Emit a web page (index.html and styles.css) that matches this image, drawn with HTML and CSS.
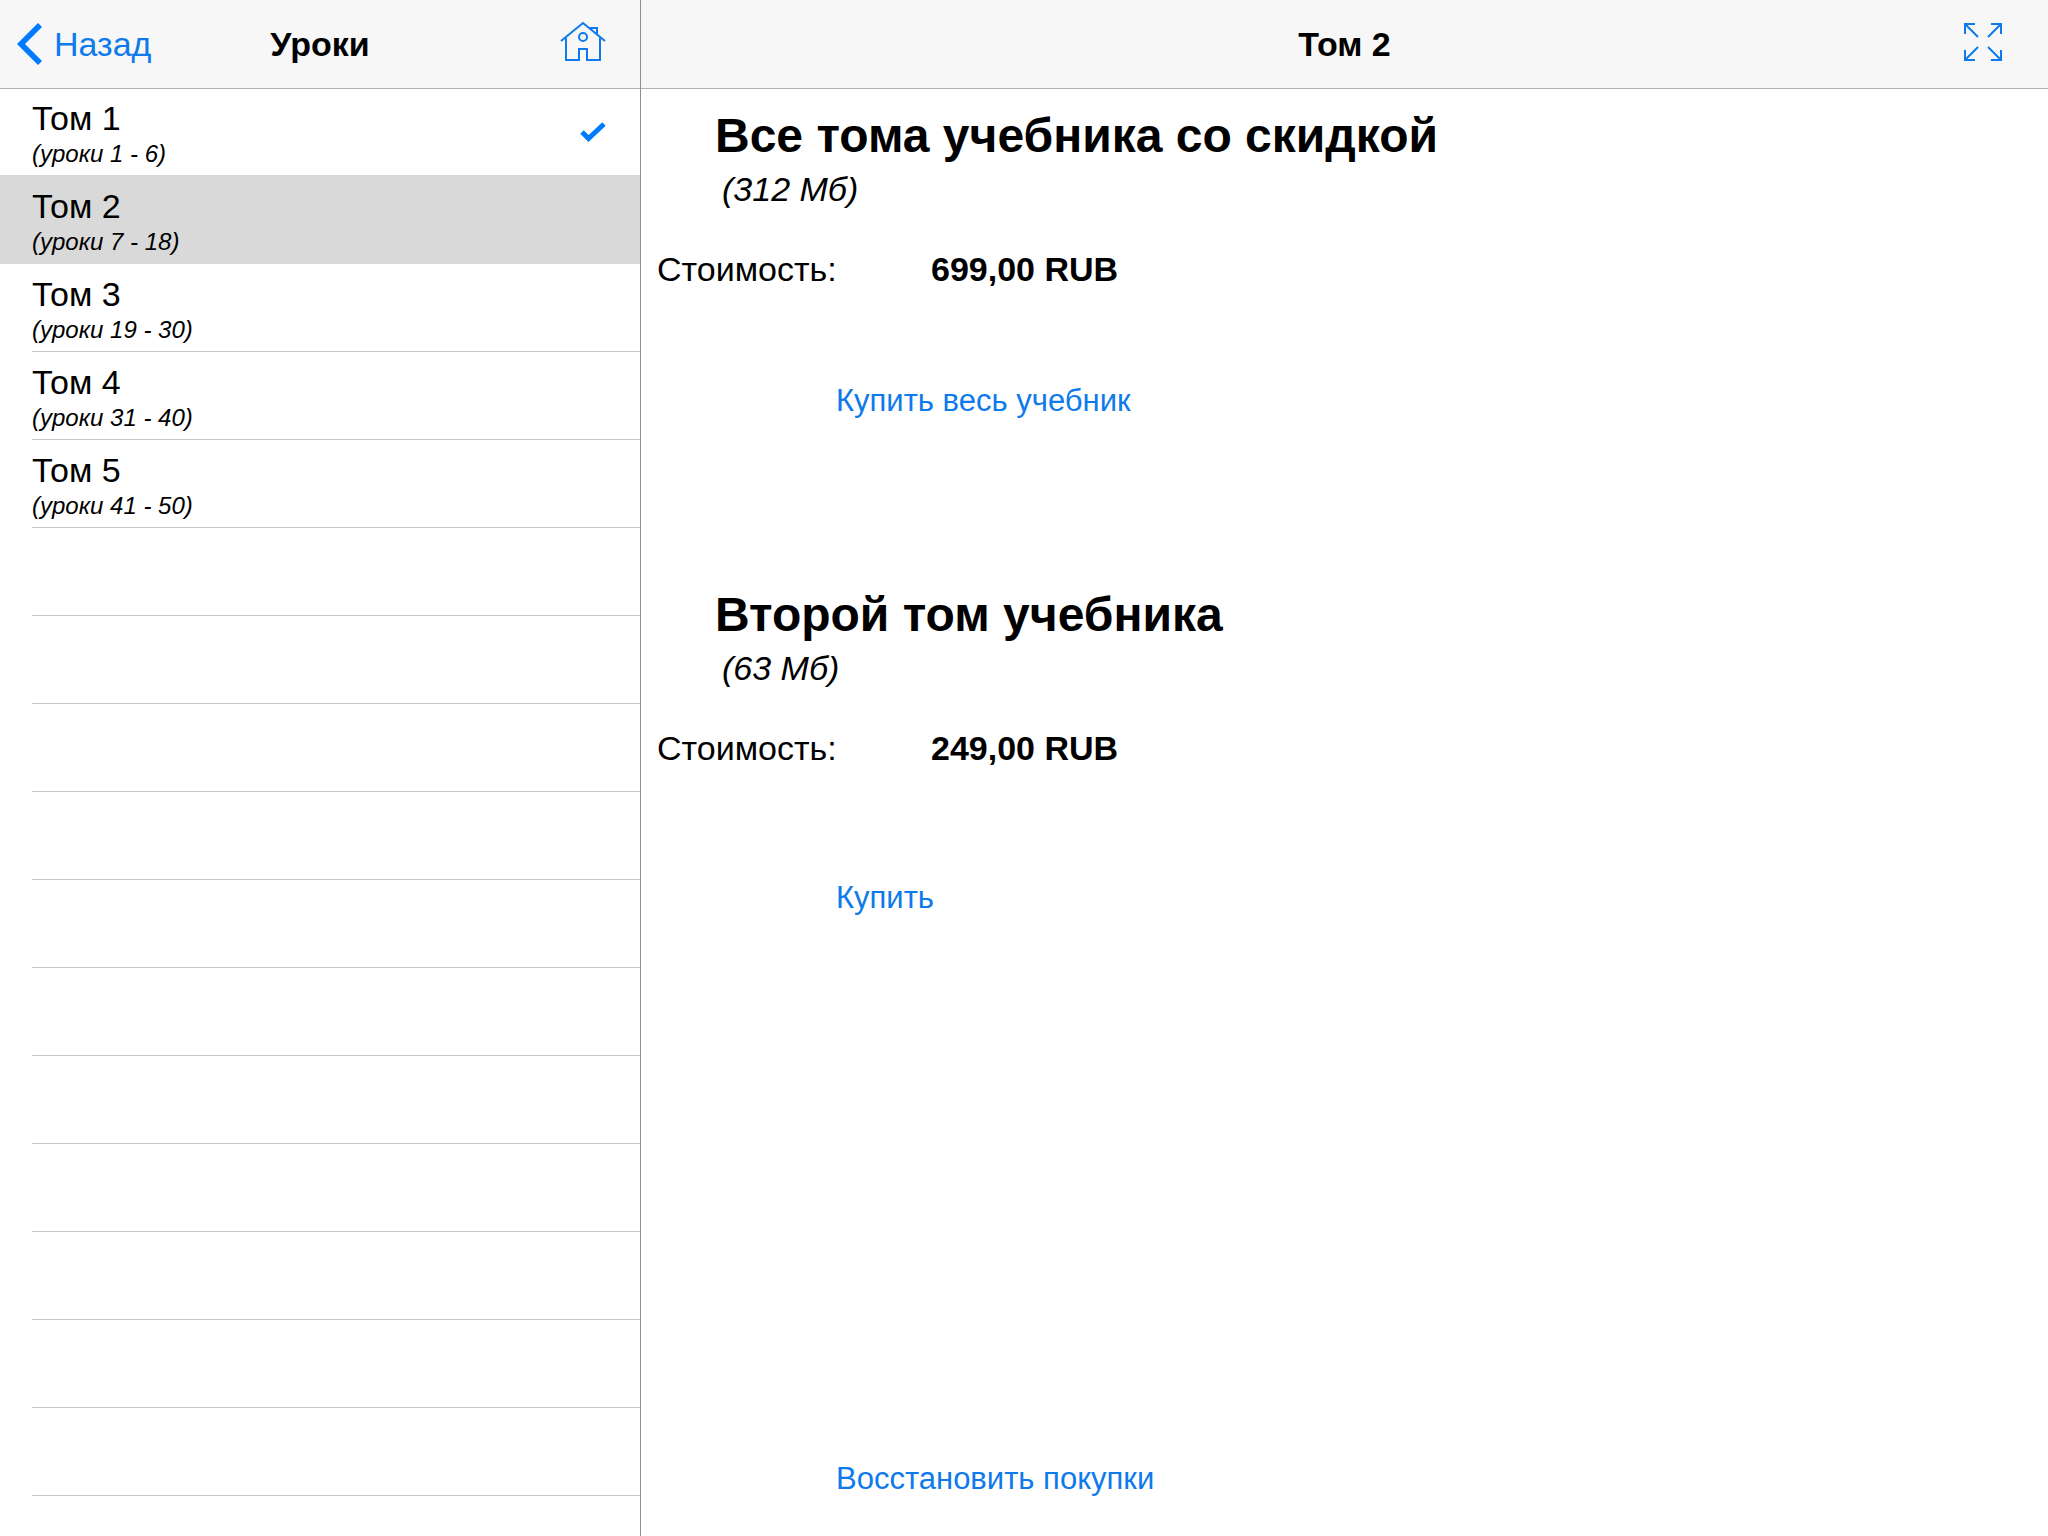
FILE: index.html
```html
<!DOCTYPE html>
<html lang="ru">
<head>
<meta charset="utf-8">
<meta name="viewport" content="width=device-width, initial-scale=1">
<title>Уроки</title>
<link rel="stylesheet" href="styles.css">
</head>
<body>
<div class="split">
  <aside class="sidebar">
    <header class="navbar">
      <button class="nav-button nav-back" type="button">
        <svg class="icon-back" viewBox="0 0 26 42" aria-hidden="true"><path d="M21 0 25 4 8 21 25 38 21 42 0 21Z" fill="#007aff"/></svg>
        <span>Назад</span>
      </button>
      <h1 class="nav-title">Уроки</h1>
      <button class="nav-button nav-home" type="button" aria-label="Домой">
        <svg class="icon-home" viewBox="0 0 46 42" fill="none" stroke="#0f7aeb" stroke-width="2" aria-hidden="true">
          <path d="M1 20 23 2 45 20"/>
          <path d="M6 17V39H19V28H27V39H40V17M30 7H37V13"/>
          <circle cx="23" cy="16" r="4"/>
        </svg>
      </button>
    </header>
    <nav class="volumes" aria-label="Тома">
      <ul class="volume-list">
        <li class="volume">
          <a class="volume-link" href="#tom1">
            <span class="volume-text"><span class="volume-name">Том 1</span><span class="volume-range">(уроки 1 - 6)</span></span>
            <svg class="icon-check" viewBox="0 0 26 20" fill="none" stroke="#007aff" stroke-width="5" role="img" aria-label="Куплено"><path d="M2 10 8.500 16.500 24 2"/></svg>
          </a>
        </li>
        <li class="volume volume-selected">
          <a class="volume-link" href="#tom2" aria-current="true">
            <span class="volume-text"><span class="volume-name">Том 2</span><span class="volume-range">(уроки 7 - 18)</span></span>
          </a>
        </li>
        <li class="volume">
          <a class="volume-link" href="#tom3">
            <span class="volume-text"><span class="volume-name">Том 3</span><span class="volume-range">(уроки 19 - 30)</span></span>
          </a>
        </li>
        <li class="volume">
          <a class="volume-link" href="#tom4">
            <span class="volume-text"><span class="volume-name">Том 4</span><span class="volume-range">(уроки 31 - 40)</span></span>
          </a>
        </li>
        <li class="volume">
          <a class="volume-link" href="#tom5">
            <span class="volume-text"><span class="volume-name">Том 5</span><span class="volume-range">(уроки 41 - 50)</span></span>
          </a>
        </li>
      </ul>
      <div class="empty-rows"></div>
    </nav>
  </aside>
  <main class="detail">
    <header class="navbar">
      <h1 class="nav-title">Том 2</h1>
      <button class="nav-button nav-expand" type="button" aria-label="На весь экран">
        <svg class="icon-expand" viewBox="0 0 38 38" fill="none" stroke="#0f7aeb" stroke-width="2" aria-hidden="true">
          <path d="M1 11V1H11M1 1 14 14"/>
          <path d="M27 1H37V11M37 1 24 14"/>
          <path d="M1 27V37H11M1 37 14 24"/>
          <path d="M27 37H37V27M37 37 24 24"/>
        </svg>
      </button>
    </header>
    <div class="store">
      <section class="offer offer-all">
        <h2 class="offer-title">Все тома учебника со скидкой</h2>
        <p class="offer-size">(312 Мб)</p>
        <p class="offer-price"><span class="price-label">Стоимость:</span><strong>699,00 RUB</strong></p>
        <button class="store-button" type="button">Купить весь учебник</button>
      </section>
      <section class="offer offer-single">
        <h2 class="offer-title">Второй том учебника</h2>
        <p class="offer-size">(63 Мб)</p>
        <p class="offer-price"><span class="price-label">Стоимость:</span><strong>249,00 RUB</strong></p>
        <button class="store-button" type="button">Купить</button>
      </section>
      <button class="store-button restore" type="button">Восстановить покупки</button>
    </div>
  </main>
</div>
</body>
</html>
```
FILE: styles.css
```css
* {
  box-sizing: border-box;
}

body {
  margin: 0;
  background: #fff;
  color: #000;
  font: 34px/40px "Liberation Sans", Arial, sans-serif;
}

h1,
h2,
p,
ul {
  margin: 0;
  padding: 0;
}

button {
  padding: 0;
  border: 0;
  background: none;
  color: #0f7aeb;
  font: inherit;
  cursor: pointer;
}

svg {
  display: block;
}

/* Two panes, 5:11 */
.split {
  display: grid;
  grid-template-columns: minmax(0, 5fr) minmax(0, 11fr);
  min-height: 100vh;
}

.sidebar,
.detail {
  display: flex;
  flex-direction: column;
}

.detail {
  border-left: 1px solid #8e8e93;
}

/* Navigation bars */
.navbar {
  position: relative;
  z-index: 1;
  display: grid;
  grid-template-columns: 1fr auto 1fr;
  align-items: center;
  height: 88px;
  background: #f7f7f7;
  box-shadow: 0 1px 0 #b2b2b2;
}

.nav-title {
  grid-column: 2;
  font-size: 34px;
  font-weight: bold;
}

.nav-button {
  display: flex;
  align-items: center;
}

.nav-back {
  justify-self: start;
  gap: 11px;
  padding-left: 17px;
}

.nav-home {
  justify-self: end;
  padding-right: 34px;
}

.nav-expand {
  justify-self: end;
  padding-right: 46px;
}

.icon-back {
  width: 26px;
  height: 42px;
}

.icon-home {
  width: 46px;
  height: 42px;
  margin-bottom: 4px;
}

.icon-expand {
  width: 38px;
  height: 38px;
  margin-bottom: 4px;
}

/* Volume list */
.volumes {
  display: flex;
  flex: 1;
  flex-direction: column;
}

.volume-list {
  list-style: none;
}

.volume {
  padding-left: 32px;
}

.volume-selected {
  background: #d9d9d9;
  box-shadow: 0 -1px 0 #d9d9d9;
}

.volume-link {
  display: flex;
  align-items: center;
  justify-content: space-between;
  height: 88px;
  padding-right: 34px;
  border-bottom: 1px solid #c8c7cc;
  color: inherit;
  text-decoration: none;
}

.volume-selected .volume-link {
  border-bottom-color: transparent;
}

.volume-text {
  display: flex;
  flex-direction: column;
  gap: 2px;
  padding-top: 2px;
}

.volume-range {
  font-size: 24px;
  font-style: italic;
  line-height: 28px;
}

.icon-check {
  width: 26px;
  height: 20px;
  overflow: visible;
}

.empty-rows {
  flex: 1;
  margin-left: 32px;
  background: repeating-linear-gradient(#fff 0 87px, #c8c7cc 87px 88px);
}

/* Store */
.store {
  display: flex;
  flex: 1;
  flex-direction: column;
  align-items: flex-start;
  padding: 20px 16px 39px;
}

.offer-all {
  padding-bottom: 168px;
}

.offer-title {
  padding-left: 58px;
  font-size: 48px;
  line-height: 56px;
}

.offer-size {
  padding: 5px 0 0 65px;
  font-style: italic;
}

.offer-price {
  display: flex;
  padding-top: 40px;
}

.price-label {
  width: 274px;
}

.store-button {
  margin-left: 179px;
  font-size: 31px;
  line-height: 36px;
}

.offer-all .store-button {
  margin-top: 94px;
}

.offer-single .store-button {
  margin-top: 112px;
}

.restore {
  margin-top: auto;
}
```
